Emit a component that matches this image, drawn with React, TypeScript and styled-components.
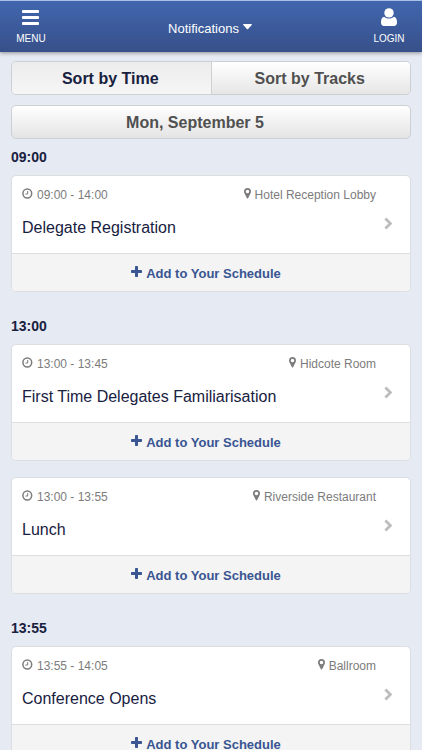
import React from "react";
import styled, { createGlobalStyle } from "styled-components";

const GlobalStyle = createGlobalStyle`
  * { box-sizing: border-box; }
  body {
    margin: 0;
    background: #e6eaf2;
    color: #18213f;
    font-family: "Liberation Sans", Arial, Helvetica, sans-serif;
  }
  button { font: inherit; cursor: pointer; }
`;

const TopBar = styled.header`
  display: grid;
  grid-template-columns: 1fr auto 1fr;
  align-items: stretch;
  height: 52px;
  padding: 0 13px 0 11px;
  color: #fff;
  border-top: 1px solid #a9c0e6;
  background: linear-gradient(#4166ae, #375089);
  box-shadow: 0 1px 4px rgba(0, 0, 0, 0.4);
`;

const BarButton = styled.button<{ $side: "start" | "end" }>`
  display: flex;
  flex-direction: column;
  align-items: center;
  justify-self: ${(p) => p.$side};
  gap: 6px;
  width: 40px;
  padding: 7px 0 0;
  border: 0;
  background: none;
  color: inherit;
  font-size: 10px;
  line-height: 14px;
`;

const Notifications = styled.button`
  display: flex;
  align-items: center;
  align-self: center;
  gap: 4px;
  padding: 4px 0 0;
  border: 0;
  background: none;
  color: inherit;
  font-size: 13px;
  line-height: 16px;

  svg { margin-bottom: 4px; }
`;

const Content = styled.main`
  padding: 9px 11px 0;
`;

const SortGroup = styled.div`
  display: flex;
  margin-bottom: 10px;
  border: 1px solid #cfd0d3;
  border-radius: 5px;
  overflow: hidden;
`;

const SortButton = styled.button<{ $active?: boolean }>`
  flex: 1;
  height: 32px;
  padding: 2px 2px 0 0;
  border: 0;
  color: ${(p) => (p.$active ? "#18213f" : "#505050")};
  background: ${(p) =>
    p.$active ? "linear-gradient(#ececec, #f6f6f6)" : "linear-gradient(#ffffff, #e6e6e6)"};
  font-size: 16px;
  font-weight: bold;

  & + & { border-left: 1px solid #cfd0d3; }
`;

const DateButton = styled.button`
  display: block;
  width: 100%;
  height: 34px;
  padding: 2px 32px 0 0;
  border: 1px solid #cfd0d3;
  border-radius: 5px;
  color: #505050;
  background: linear-gradient(#ffffff, #e4e4e4);
  font-size: 16px;
  font-weight: bold;
`;

const SlotHeading = styled.h2`
  margin: 0;
  font-size: 14px;
  line-height: 36px;
`;

const Card = styled.article`
  margin-bottom: 16px;
  border: 1px solid #dcdee2;
  border-radius: 5px;
  background: #fff;
  overflow: hidden;
`;

const Session = styled.a`
  display: grid;
  grid-template-columns: 1fr 24px;
  height: 77px;
  padding: 11px 10px 0;
  color: inherit;
  text-decoration: none;

  > svg { margin: 30px 0 0 8px; }
`;

const Meta = styled.div`
  display: flex;
  justify-content: space-between;
  color: #7c7c7c;
  font-size: 12px;
  line-height: 16px;
`;

const MetaItem = styled.span`
  display: flex;
  align-items: center;
  gap: 4px;

  svg { margin-bottom: 3px; }
`;

const Title = styled.h3`
  margin: 15px 0 0;
  font-size: 16px;
  font-weight: normal;
  line-height: 20px;
`;

const AddButton = styled.button`
  display: flex;
  align-items: center;
  justify-content: center;
  gap: 4px;
  width: 100%;
  height: 38px;
  padding: 2px 10px 0 0;
  border: 0;
  border-top: 1px solid #dcdee0;
  color: #395592;
  background: #f4f4f4;
  font-size: 13px;
  font-weight: bold;

  svg { margin-bottom: 4px; }
`;

const MenuIcon = () => (
  <svg width="18" height="18" viewBox="0 0 18 18" fill="currentColor" aria-hidden="true">
    <rect y="2" width="17" height="3" rx="0.8" />
    <rect y="8" width="17" height="3" rx="0.8" />
    <rect y="14" width="17" height="3" rx="0.8" />
  </svg>
);

const UserIcon = () => (
  <svg width="18" height="18" viewBox="0 0 18 18" fill="currentColor" aria-hidden="true">
    <path d="M4 8.8C1.7 9.3 1 11.8 1 14.8C1 16.8 2.2 18 4 18H14C15.8 18 17 16.8 17 14.8C17 11.8 16.3 9.3 14 8.8C12.6 10 11 10.6 9 10.6S5.4 10 4 8.8Z" />
    <circle cx="9" cy="4.9" r="4.7" />
  </svg>
);

const CaretIcon = () => (
  <svg width="9" height="6" viewBox="0 0 9 6" fill="currentColor" aria-hidden="true">
    <path d="M0.7 0H8.3Q9.3 0.2 8.7 1L5.1 5Q4.5 5.5 3.9 5L0.3 1Q-0.3 0.2 0.7 0Z" />
  </svg>
);

const ClockIcon = () => (
  <svg width="11" height="11" viewBox="0 0 11 11" fill="none" stroke="currentColor" aria-hidden="true">
    <circle cx="5.3" cy="5.5" r="4.4" strokeWidth="1.5" />
    <path d="M5.7 3V6H3.4" strokeWidth="1" />
  </svg>
);

const PinIcon = () => (
  <svg width="7" height="11" viewBox="0 0 7 11" fill="currentColor" aria-hidden="true">
    <path
      fillRule="evenodd"
      d="M3.5 0A3.5 3.5 0 0 0 0 3.5Q0 4.3 .3 4.9L2.8 10.1Q3.5 11.1 4.2 10.1L6.7 4.9Q7 4.3 7 3.5A3.5 3.5 0 0 0 3.5 0ZM3.5 1.7A1.8 1.8 0 1 1 3.5 5.3A1.8 1.8 0 1 1 3.5 1.7Z"
    />
  </svg>
);

const ChevronIcon = () => (
  <svg width="9" height="13" viewBox="0 0 9 13" fill="none" stroke="#bdbdbd" strokeWidth="2.8" aria-hidden="true">
    <path d="M1.4 1.4L6.4 6.5L1.4 11.6" />
  </svg>
);

const PlusIcon = () => (
  <svg width="11" height="11" viewBox="0 0 11 11" fill="currentColor" aria-hidden="true">
    <rect x="4" width="3" height="11" rx="0.7" />
    <rect y="4" width="11" height="3" rx="0.7" />
  </svg>
);

type SessionInfo = { time: string; place: string; title: string };

const slots: { start: string; sessions: SessionInfo[] }[] = [
  {
    start: "09:00",
    sessions: [{ time: "09:00 - 14:00", place: "Hotel Reception Lobby", title: "Delegate Registration" }],
  },
  {
    start: "13:00",
    sessions: [
      { time: "13:00 - 13:45", place: "Hidcote Room", title: "First Time Delegates Familiarisation" },
      { time: "13:00 - 13:55", place: "Riverside Restaurant", title: "Lunch" },
    ],
  },
  {
    start: "13:55",
    sessions: [{ time: "13:55 - 14:05", place: "Ballroom", title: "Conference Opens" }],
  },
];

const SessionCard = ({ time, place, title }: SessionInfo) => (
  <Card>
    <Session href="#">
      <div>
        <Meta>
          <MetaItem>
            <ClockIcon />
            {time}
          </MetaItem>
          <MetaItem>
            <PinIcon />
            {place}
          </MetaItem>
        </Meta>
        <Title>{title}</Title>
      </div>
      <ChevronIcon />
    </Session>
    <AddButton type="button">
      <PlusIcon />
      Add to Your Schedule
    </AddButton>
  </Card>
);

export default function App() {
  return (
    <>
      <GlobalStyle />
      <TopBar>
        <BarButton type="button" $side="start">
          <MenuIcon />
          MENU
        </BarButton>
        <Notifications type="button">
          Notifications
          <CaretIcon />
        </Notifications>
        <BarButton type="button" $side="end">
          <UserIcon />
          LOGIN
        </BarButton>
      </TopBar>
      <Content>
        <SortGroup>
          <SortButton type="button" $active aria-pressed="true">
            Sort by Time
          </SortButton>
          <SortButton type="button" aria-pressed="false">
            Sort by Tracks
          </SortButton>
        </SortGroup>
        <DateButton type="button">Mon, September 5</DateButton>
        {slots.map((slot) => (
          <section key={slot.start}>
            <SlotHeading>{slot.start}</SlotHeading>
            {slot.sessions.map((session) => (
              <SessionCard key={session.title} {...session} />
            ))}
          </section>
        ))}
      </Content>
    </>
  );
}
